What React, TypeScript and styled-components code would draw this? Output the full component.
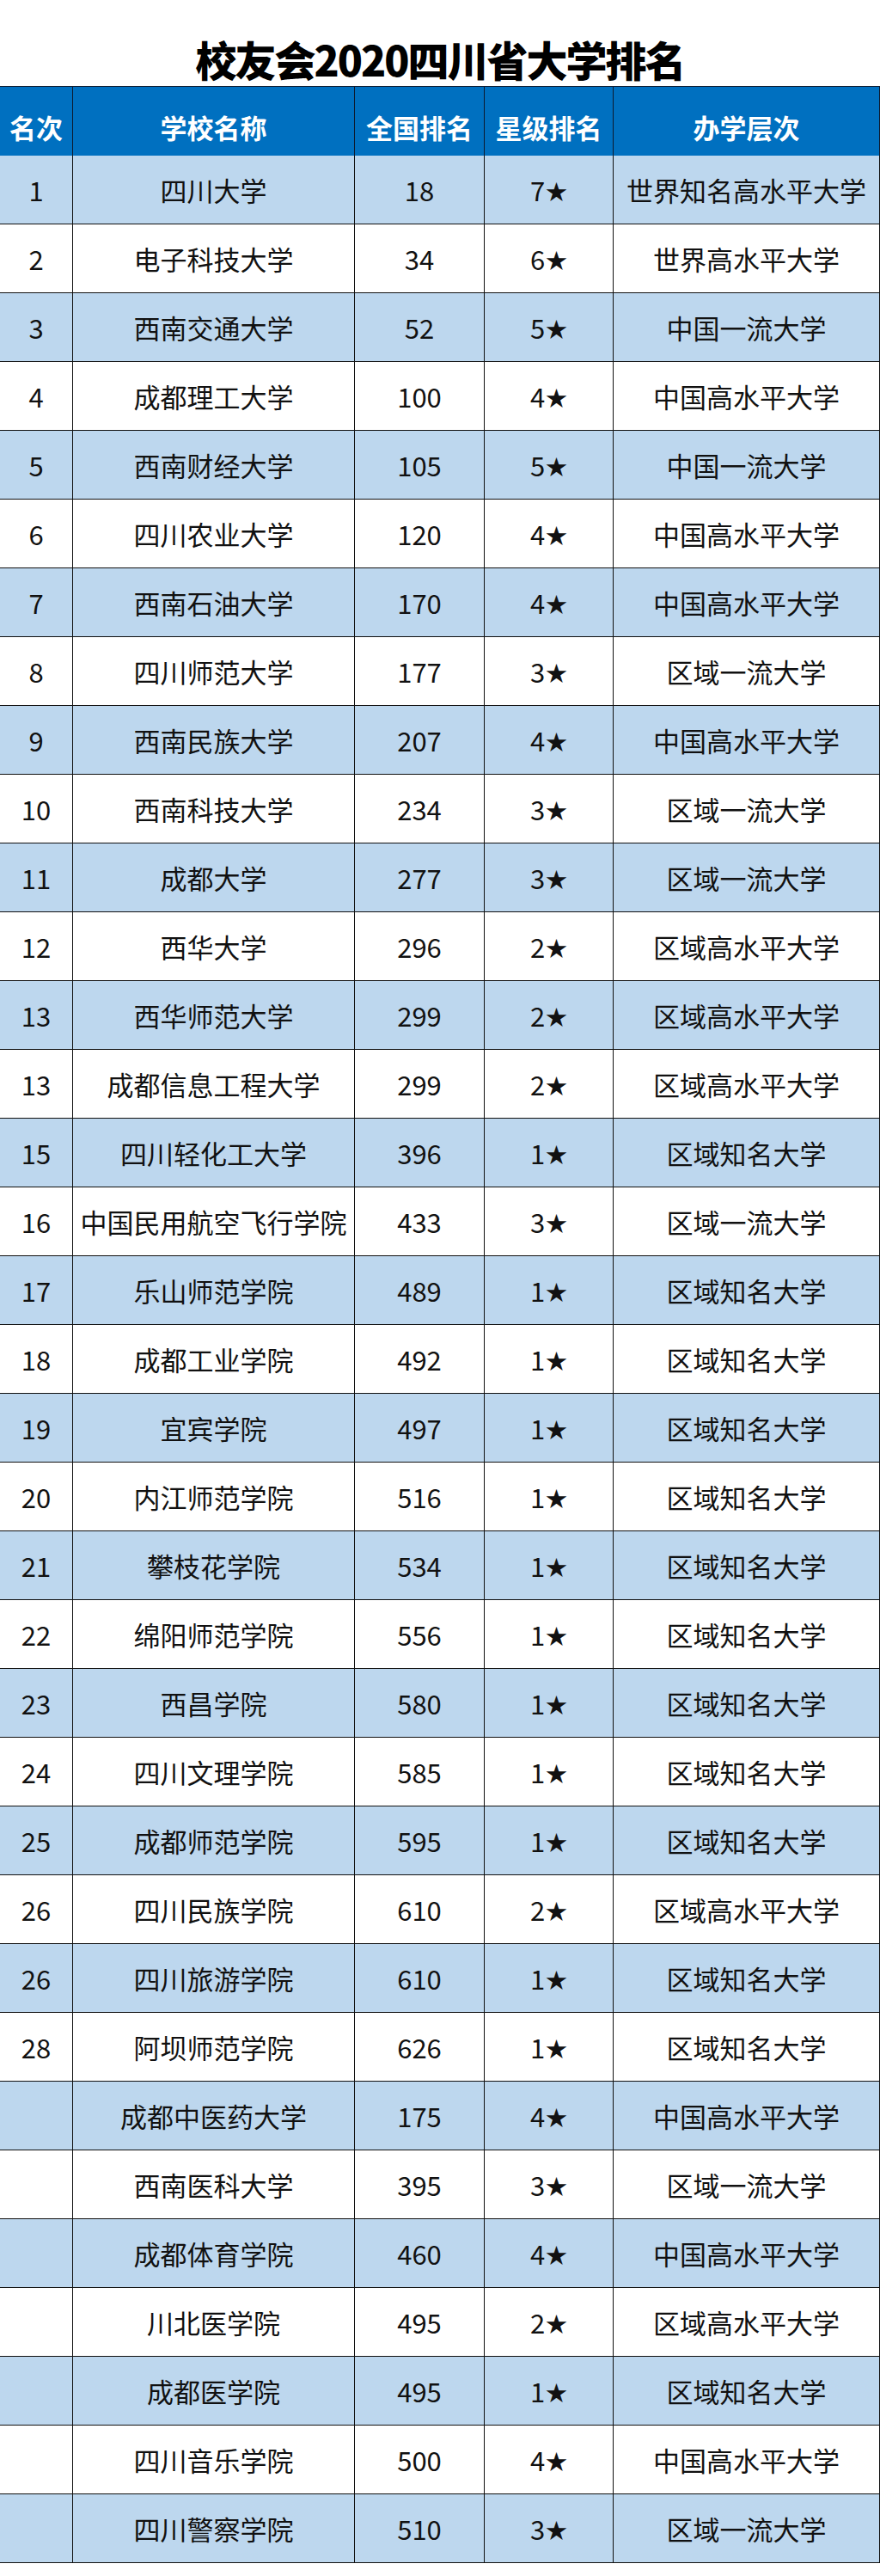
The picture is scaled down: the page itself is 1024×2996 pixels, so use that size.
import React from "react";
import styled, { createGlobalStyle } from "styled-components";

const GlobalStyle = createGlobalStyle`
  html, body {
    margin: 0;
    padding: 0;
    background: #ffffff;
  }
  body {
    font-family: "Noto Sans CJK SC", "Noto Sans", sans-serif;
    color: #000;
  }
`;

type Row = {
  rank: string;
  name: string;
  national: number;
  stars: number;
  level: string;
};

const rows: Row[] = [
  { rank: "1", name: "四川大学", national: 18, stars: 7, level: "世界知名高水平大学" },
  { rank: "2", name: "电子科技大学", national: 34, stars: 6, level: "世界高水平大学" },
  { rank: "3", name: "西南交通大学", national: 52, stars: 5, level: "中国一流大学" },
  { rank: "4", name: "成都理工大学", national: 100, stars: 4, level: "中国高水平大学" },
  { rank: "5", name: "西南财经大学", national: 105, stars: 5, level: "中国一流大学" },
  { rank: "6", name: "四川农业大学", national: 120, stars: 4, level: "中国高水平大学" },
  { rank: "7", name: "西南石油大学", national: 170, stars: 4, level: "中国高水平大学" },
  { rank: "8", name: "四川师范大学", national: 177, stars: 3, level: "区域一流大学" },
  { rank: "9", name: "西南民族大学", national: 207, stars: 4, level: "中国高水平大学" },
  { rank: "10", name: "西南科技大学", national: 234, stars: 3, level: "区域一流大学" },
  { rank: "11", name: "成都大学", national: 277, stars: 3, level: "区域一流大学" },
  { rank: "12", name: "西华大学", national: 296, stars: 2, level: "区域高水平大学" },
  { rank: "13", name: "西华师范大学", national: 299, stars: 2, level: "区域高水平大学" },
  { rank: "13", name: "成都信息工程大学", national: 299, stars: 2, level: "区域高水平大学" },
  { rank: "15", name: "四川轻化工大学", national: 396, stars: 1, level: "区域知名大学" },
  { rank: "16", name: "中国民用航空飞行学院", national: 433, stars: 3, level: "区域一流大学" },
  { rank: "17", name: "乐山师范学院", national: 489, stars: 1, level: "区域知名大学" },
  { rank: "18", name: "成都工业学院", national: 492, stars: 1, level: "区域知名大学" },
  { rank: "19", name: "宜宾学院", national: 497, stars: 1, level: "区域知名大学" },
  { rank: "20", name: "内江师范学院", national: 516, stars: 1, level: "区域知名大学" },
  { rank: "21", name: "攀枝花学院", national: 534, stars: 1, level: "区域知名大学" },
  { rank: "22", name: "绵阳师范学院", national: 556, stars: 1, level: "区域知名大学" },
  { rank: "23", name: "西昌学院", national: 580, stars: 1, level: "区域知名大学" },
  { rank: "24", name: "四川文理学院", national: 585, stars: 1, level: "区域知名大学" },
  { rank: "25", name: "成都师范学院", national: 595, stars: 1, level: "区域知名大学" },
  { rank: "26", name: "四川民族学院", national: 610, stars: 2, level: "区域高水平大学" },
  { rank: "26", name: "四川旅游学院", national: 610, stars: 1, level: "区域知名大学" },
  { rank: "28", name: "阿坝师范学院", national: 626, stars: 1, level: "区域知名大学" },
  { rank: "", name: "成都中医药大学", national: 175, stars: 4, level: "中国高水平大学" },
  { rank: "", name: "西南医科大学", national: 395, stars: 3, level: "区域一流大学" },
  { rank: "", name: "成都体育学院", national: 460, stars: 4, level: "中国高水平大学" },
  { rank: "", name: "川北医学院", national: 495, stars: 2, level: "区域高水平大学" },
  { rank: "", name: "成都医学院", national: 495, stars: 1, level: "区域知名大学" },
  { rank: "", name: "四川音乐学院", national: 500, stars: 4, level: "中国高水平大学" },
  { rank: "", name: "四川警察学院", national: 510, stars: 3, level: "区域一流大学" },
];

const headers = ["名次", "学校名称", "全国排名", "星级排名", "办学层次"];

const Page = styled.div`
  width: 1024px;
  background: #ffffff;
`;

const Title = styled.h1`
  margin: 0;
  box-sizing: border-box;
  height: 100px;
  padding-top: 44px;
  font-family: "Noto Sans CJK SC", sans-serif;
  font-size: 48px;
  line-height: 48px;
  font-weight: 900;
  text-align: center;
  color: #000;
  letter-spacing: -2px;
`;

const Sheet = styled.div`
  display: grid;
  grid-template-columns: 85px 328px 151px 150px 310px;
  grid-auto-rows: 80px;
  border-top: 1px solid #0d1a2e;
`;

const HeadCell = styled.div`
  box-sizing: border-box;
  height: 93px;
  display: flex;
  align-items: center;
  justify-content: center;
  background: #0070c0;
  color: #ffffff;
  font-family: "Noto Sans CJK SC", sans-serif;
  font-size: 31px;
  font-weight: 700;
  border-right: 1px solid #0d1a2e;
  border-bottom: 1px solid #0d1a2e;
  white-space: nowrap;
`;

const Cell = styled.div<{ $alt: boolean }>`
  box-sizing: border-box;
  display: flex;
  align-items: center;
  justify-content: center;
  background: ${(p) => (p.$alt ? "#bdd7ee" : "#ffffff")};
  color: #111111;
  font-family: "Noto Sans CJK SC", sans-serif;
  font-size: 31px;
  font-weight: 400;
  border-right: 1px solid #111111;
  border-bottom: 1px solid #111111;
  white-space: nowrap;
`;

const Star = styled.span`
  font-family: "Noto Sans CJK SC", sans-serif;
  font-size: 25px;
  margin-left: 1px;
`;

export default function App() {
  return (
    <Page>
      <GlobalStyle />
      <Title>校友会2020四川省大学排名</Title>
      <Sheet>
        {headers.map((h) => (
          <HeadCell key={h}>{h}</HeadCell>
        ))}
        {rows.map((r, i) => {
          const alt = i % 2 === 0;
          return (
            <React.Fragment key={r.name}>
              <Cell $alt={alt}>{r.rank}</Cell>
              <Cell $alt={alt}>{r.name}</Cell>
              <Cell $alt={alt}>{r.national}</Cell>
              <Cell $alt={alt}>
                {r.stars}
                <Star>★</Star>
              </Cell>
              <Cell $alt={alt}>{r.level}</Cell>
            </React.Fragment>
          );
        })}
      </Sheet>
    </Page>
  );
}
